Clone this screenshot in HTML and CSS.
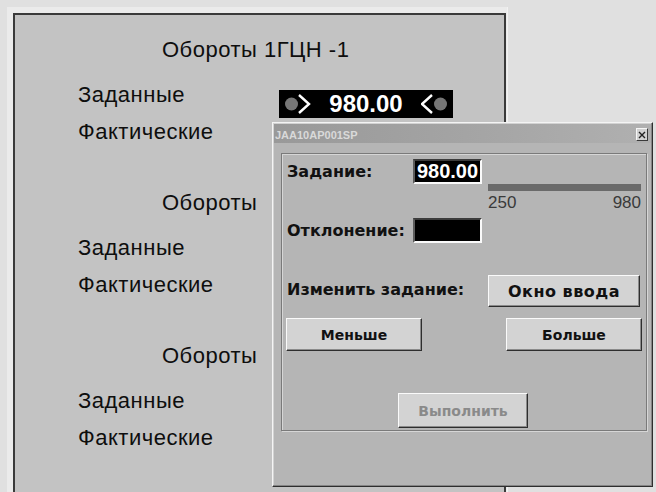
FILE: index.html
```html
<!DOCTYPE html>
<html lang="ru">
<head>
<meta charset="utf-8">
<title>Обороты 1ГЦН</title>
<link rel="stylesheet" href="styles.css">
</head>
<body>
<div class="screen">
  <div class="frame">
    <div class="panel">
      <section class="block">
        <h2 class="block-title">Обороты 1ГЦН -1</h2>
        <div class="row">
          <span class="label">Заданные</span>
          <div class="value">
            <svg class="ind" width="32" height="28" viewBox="0 0 32 28"><circle cx="12.5" cy="14" r="6.5" fill="#767676"/><polyline points="20,5 30,14 20,23" fill="none" stroke="#fff" stroke-width="2.4"/></svg>
            <span class="value-num">980.00</span>
            <svg class="ind" width="32" height="28" viewBox="0 0 32 28"><polyline points="11,5 1,14 11,23" fill="none" stroke="#fff" stroke-width="2.4"/><circle cx="19.5" cy="14" r="6.5" fill="#767676"/></svg>
          </div>
        </div>
        <div class="row">
          <span class="label">Фактические</span>
        </div>
      </section>
      <section class="block">
        <h2 class="block-title block-title-next">Обороты 1ГЦН -2</h2>
        <div class="row"><span class="label">Заданные</span></div>
        <div class="row"><span class="label">Фактические</span></div>
      </section>
      <section class="block">
        <h2 class="block-title block-title-next">Обороты 1ГЦН -3</h2>
        <div class="row"><span class="label">Заданные</span></div>
        <div class="row"><span class="label">Фактические</span></div>
      </section>
    </div>
  </div>
</div>

<div class="dialog">
  <div class="titlebar">
    <span class="titlebar-text">JAA10AP001SP</span>
    <span class="close">
      <svg width="8" height="8" viewBox="0 0 8 8"><path d="M1 1L7 7M7 1L1 7" stroke="#222" stroke-width="1.4"/></svg>
    </span>
  </div>
  <div class="group">
    <div class="frow frow-set">
      <span class="flabel">Задание:</span>
      <span class="field field-value">980.00</span>
      <div class="scale">
        <div class="scale-bar"></div>
        <div class="scale-nums"><span>250</span><span>980</span></div>
      </div>
    </div>
    <div class="frow frow-dev">
      <span class="flabel">Отклонение:</span>
      <span class="field"></span>
    </div>
    <div class="frow frow-change">
      <span class="flabel flabel-wide">Изменить задание:</span>
      <button class="btn btn-input">Окно ввода</button>
    </div>
    <div class="frow frow-step">
      <button class="btn btn-step">Меньше</button>
      <button class="btn btn-step">Больше</button>
    </div>
    <div class="frow frow-run">
      <button class="btn btn-run" disabled>Выполнить</button>
    </div>
  </div>
</div>
</body>
</html>
```

FILE: styles.css
```css
html, body {
  margin: 0;
  padding: 0;
}

body {
  width: 656px;
  height: 492px;
  overflow: hidden;
  background: #e0e0e0;
  position: relative;
  font-family: "Liberation Sans", Arial, sans-serif;
}

.screen {
  padding: 7px 0 0 7px;
}

.frame {
  width: 494px;
  padding: 6px 0 0 6px;
  background: #ebebeb;
  border-right: 1px solid #f2f2f2;
}

/* the panel runs on below the visible area, so no bottom edge */
.panel {
  height: 454px;
  width: 489px;
  background: #c3c3c3;
  border: 2px solid #3a3a3a;
  border-bottom: 0;
  padding-top: 23px;
  box-sizing: content-box;
}

/* one block per pump: title, set value, actual value */
.block {
  padding-left: 63px;
  margin-bottom: 34px;
}

.block:last-child {
  margin-bottom: 0;
}

.block-title {
  margin: 0 0 21px 84px;
  font-weight: normal;
  font-size: 22px;
  letter-spacing: 0.5px;
  line-height: 24px;
  color: #0e0e0e;
  white-space: nowrap;
}

.block-title-next {
  word-spacing: 14px;
}

.row {
  display: flex;
  align-items: flex-start;
  height: 37px;
}

.label {
  width: 201px;
  font-size: 22px;
  letter-spacing: 0.5px;
  line-height: 24px;
  color: #0e0e0e;
}

.value {
  margin-top: 7px;
  width: 174px;
  height: 28px;
  background: #000;
  display: flex;
  align-items: center;
  justify-content: space-between;
}

.ind {
  display: block;
}

.value-num {
  color: #fff;
  font-weight: bold;
  font-size: 24px;
  line-height: 28px;
}

/* setpoint window */
.dialog {
  position: absolute;
  left: 272px;
  top: 122px;
  width: 381px;
  height: 365px;
  box-sizing: border-box;
  background: #b5b5b5;
  border: 1px solid;
  border-color: #f4f4f4 #2e2e2e #2e2e2e #f4f4f4;
  box-shadow: inset -1px -1px 0 #858585, inset 1px 1px 0 #d2d2d2;
  font-family: "DejaVu Sans", Verdana, sans-serif;
}

.titlebar {
  margin: 1px 1px 0 1px;
  height: 19px;
  background: linear-gradient(90deg, #999 0%, #a6a6a6 60%, #b0b0b0 100%);
  display: flex;
  align-items: center;
  justify-content: space-between;
  padding: 0 3px 0 1px;
}

.titlebar-text {
  font-family: "Liberation Sans", Arial, sans-serif;
  font-weight: bold;
  font-size: 11px;
  color: #d9d9d9;
  padding-top: 3px;
}

.close {
  width: 12px;
  height: 13px;
  box-sizing: border-box;
  background: #d2d2d2;
  border: 1px solid;
  border-color: #f6f6f6 #3a3a3a #3a3a3a #f6f6f6;
  display: flex;
  align-items: center;
  justify-content: center;
  margin-top: 2px;
}

.group {
  margin: 10px 5px 0 8px;
  height: 278px;
  box-sizing: border-box;
  border: 1px solid #7a7a7a;
  box-shadow: 1px 1px 0 #d6d6d6, inset 1px 1px 0 #d6d6d6;
  padding: 5px 5px 0 5px;
  display: flex;
  flex-direction: column;
}

.frow {
  display: flex;
  align-items: flex-start;
}

.flabel {
  width: 126px;
  font-weight: bold;
  font-size: 16px;
  line-height: 25px;
  color: #111;
  white-space: nowrap;
}

.flabel-wide {
  width: 201px;
  line-height: 30px;
}

.field {
  width: 69px;
  height: 25px;
  box-sizing: border-box;
  background: #000;
  border: 2px solid;
  border-color: #3c3c3c #fafafa #fafafa #5c5c5c;
}

.field-value {
  font-family: "Liberation Sans", Arial, sans-serif;
  font-weight: bold;
  font-size: 20px;
  line-height: 21px;
  color: #fff;
  text-align: center;
}

.scale {
  width: 153px;
  margin-left: 6px;
}

.scale-bar {
  margin-top: 25px;
  height: 7px;
  background: #6a6a6a;
}

.scale-nums {
  display: flex;
  justify-content: space-between;
  margin-top: 3px;
  font-family: "Liberation Sans", Arial, sans-serif;
  font-size: 17px;
  line-height: 17px;
  color: #3a3a3a;
}

.frow-dev {
  margin-top: 7px;
}

.frow-change {
  margin-top: 32px;
}

.frow-step {
  margin-top: 11px;
  justify-content: space-between;
  margin-left: -1px;
  width: 356px;
}

.frow-run {
  margin-top: 42px;
  justify-content: center;
  padding-right: 2px;
}

.btn {
  font-family: "DejaVu Sans", Verdana, sans-serif;
  font-weight: bold;
  font-size: 14px;
  color: #111;
  background: #d3d3d3;
  border: 1px solid;
  border-color: #fafafa #2e2e2e #2e2e2e #fafafa;
  box-shadow: inset -1px -1px 0 #8a8a8a;
  padding: 0;
  margin: 0;
}

.btn-input {
  width: 152px;
  height: 32px;
  font-size: 16px;
  letter-spacing: 0.5px;
}

.btn-step {
  width: 136px;
  height: 33px;
}

.btn-run {
  width: 130px;
  height: 35px;
  color: #8a8a8a;
}
```
